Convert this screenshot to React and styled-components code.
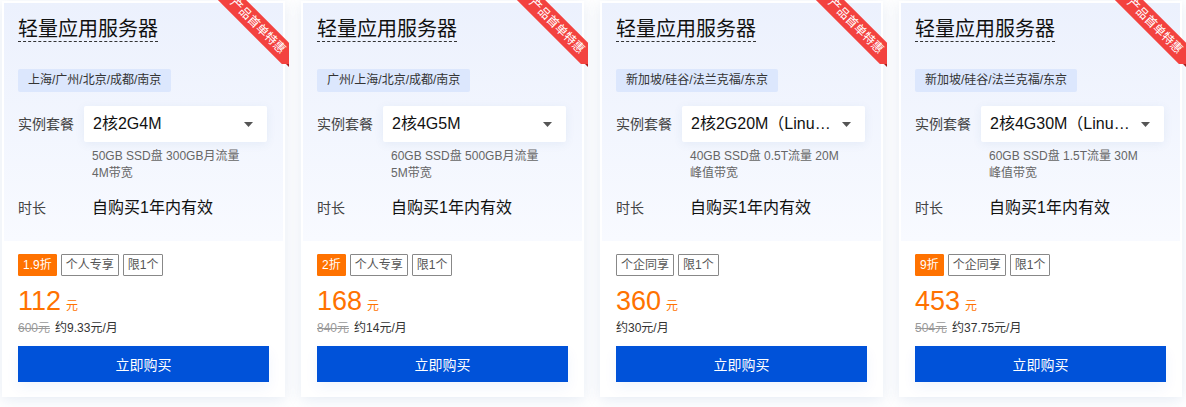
import styled, { createGlobalStyle } from 'styled-components';

const GlobalStyle = createGlobalStyle`
    body {
        margin: 0;
        background: #ffffff;
        font-family: 'Liberation Sans', 'Noto Sans CJK SC', sans-serif;
    }
`;

const cards = [
    { regions: '上海/广州/北京/成都/南京', plan: '2核2G4M', desc: ['50GB SSD盘 300GB月流量', '4M带宽'], discount: '1.9折', share: '个人专享', price: '112', orig: '600元', monthly: '约9.33元/月' },
    { regions: '广州/上海/北京/成都/南京', plan: '2核4G5M', desc: ['60GB SSD盘 500GB月流量', '5M带宽'], discount: '2折', share: '个人专享', price: '168', orig: '840元', monthly: '约14元/月' },
    { regions: '新加坡/硅谷/法兰克福/东京', plan: '2核2G20M（Linux专享）', desc: ['40GB SSD盘 0.5T流量 20M', '峰值带宽'], discount: null, share: '个企同享', price: '360', orig: null, monthly: '约30元/月' },
    { regions: '新加坡/硅谷/法兰克福/东京', plan: '2核4G30M（Linux专享）', desc: ['60GB SSD盘 1.5T流量 30M', '峰值带宽'], discount: '9折', share: '个企同享', price: '453', orig: '504元', monthly: '约37.75元/月' },
];

function Caret() {
    return (
        <svg width="9" height="5" viewBox="0 0 9 5">
            <path d="M0 0 L9 0 L4.5 5 Z" fill="#555" />
        </svg>
    );
}

function ProductCard({ data }) {
    return (
        <Card>
            <RibbonClip>
                <Ribbon>产品首单特惠</Ribbon>
            </RibbonClip>
            <RibbonFold />
            <Top>
                <Title>轻量应用服务器</Title>
                <Region>{data.regions}</Region>
                <Row>
                    <Label>实例套餐</Label>
                    <Select>
                        <span>{data.plan}</span>
                        <Caret />
                    </Select>
                </Row>
                <Desc>
                    {data.desc.map((line) => <div key={line}>{line}</div>)}
                </Desc>
                <Row className="duration">
                    <Label>时长</Label>
                    <Value>自购买1年内有效</Value>
                </Row>
            </Top>
            <Bottom>
                <Tags>
                    {data.discount && <Tag $hot>{data.discount}</Tag>}
                    <Tag>{data.share}</Tag>
                    <Tag>限1个</Tag>
                </Tags>
                <Price>
                    {data.price}<small>元</small>
                </Price>
                <Sub>
                    {data.orig && <s>{data.orig}</s>}
                    <span>{data.monthly}</span>
                </Sub>
                <BuyButton>立即购买</BuyButton>
            </Bottom>
        </Card>
    );
}

export default function App() {
    return (
        <>
            <GlobalStyle />
            <Page>
                {cards.map((c) => <ProductCard key={c.plan} data={c} />)}
            </Page>
        </>
    );
}

const Page = styled.div`
    display: flex;
    gap: 16px;
    padding: 1px 2px 0;
    width: 1186px;
    height: 407px;
    box-sizing: border-box;
`;

const Card = styled.div`
    position: relative;
    width: 283px;
    height: 396px;
    box-sizing: border-box;
    padding: 2px 2px 0;
    background: #fff;
    box-shadow: 0 3px 14px 0 rgba(55, 99, 170, 0.13);
    display: flex;
    flex-direction: column;
`;

const RibbonClip = styled.div`
    position: absolute;
    top: -1px;
    right: -4px;
    width: 80px;
    height: 64px;
    overflow: hidden;
    z-index: 2;
`;

const Ribbon = styled.div`
    position: absolute;
    left: -16px;
    top: 16px;
    width: 130px;
    height: 20px;
    line-height: 20px;
    text-align: center;
    background: #f3423f;
    color: #fff;
    font-size: 12px;
    transform: rotate(45deg);
`;

const RibbonFold = styled.div`
    position: absolute;
    right: -4px;
    top: 62px;
    width: 0;
    height: 0;
    border-top: 4px solid #a81d1d;
    border-left: 4px solid transparent;
`;

const Top = styled.div`
    background: linear-gradient(180deg, #ecf1fd 0%, #f8faff 100%);
    padding: 14px 14px 0;
    height: 238px;
    box-sizing: border-box;
`;

const Title = styled.div`
    display: inline-block;
    vertical-align: top;
    font-size: 20px;
    line-height: 24px;
    color: #111;
    border-bottom: 1px dashed #333;
`;

const Region = styled.div`
    display: table;
    margin-top: 27px;
    height: 23px;
    line-height: 23px;
    padding: 0 10px;
    background: #dce7fd;
    border-radius: 2px;
    font-size: 12px;
    color: #333;
`;

const Row = styled.div`
    display: flex;
    align-items: center;
    margin-top: 14px;
    height: 36px;

    &.duration {
        margin-top: 14px;
        height: 24px;
    }
`;

const Label = styled.div`
    width: 66px;
    flex-shrink: 0;
    font-size: 14px;
    line-height: 20px;
    color: #444;
`;

const Select = styled.div`
    width: 183px;
    height: 36px;
    box-sizing: border-box;
    padding: 0 14px 0 9px;
    background: #fff;
    border-radius: 2px;
    box-shadow: 0 2px 10px rgba(55, 99, 170, 0.08);
    display: flex;
    align-items: center;
    gap: 10px;

    span {
        flex: 1;
        min-width: 0;
        font-size: 16px;
        line-height: 20px;
        color: #111;
        white-space: nowrap;
        overflow: hidden;
        text-overflow: ellipsis;
    }
`;

const Desc = styled.div`
    margin: 6px 0 0 74px;
    font-size: 12px;
    line-height: 17px;
    color: #666;
`;

const Value = styled.div`
    padding-left: 8px;
    font-size: 16px;
    line-height: 24px;
    color: #111;
`;

const Bottom = styled.div`
    padding: 13px 14px 0;
    display: flex;
    flex-direction: column;
`;

const Tags = styled.div`
    display: flex;
    gap: 4px;
    height: 22px;
`;

const Tag = styled.div`
    height: 22px;
    line-height: 20px;
    box-sizing: border-box;
    padding: 0 4px;
    font-size: 12px;
    border-radius: 1px;
    border: 1px solid ${(p) => (p.$hot ? '#ff7200' : '#888')};
    background: ${(p) => (p.$hot ? '#ff7200' : '#fff')};
    color: ${(p) => (p.$hot ? '#fff' : '#555')};
`;

const Price = styled.div`
    margin-top: 9px;
    height: 32px;
    font-size: 27px;
    line-height: 32px;
    color: #ff7200;

    small {
        font-size: 12px;
        line-height: 12px;
        margin-left: 5px;
    }
`;

const Sub = styled.div`
    margin-top: 2px;
    height: 18px;
    font-size: 12px;
    line-height: 18px;
    color: #333;
    display: flex;
    gap: 5px;

    s {
        color: #999;
    }
`;

const BuyButton = styled.button`
    margin-top: 9px;
    width: 251px;
    height: 36px;
    border: none;
    border-radius: 0;
    background: #0052d9;
    color: #fff;
    font-family: inherit;
    font-size: 14px;
    cursor: pointer;
    box-shadow: 0 6px 14px rgba(0, 82, 217, 0.06);
`;
